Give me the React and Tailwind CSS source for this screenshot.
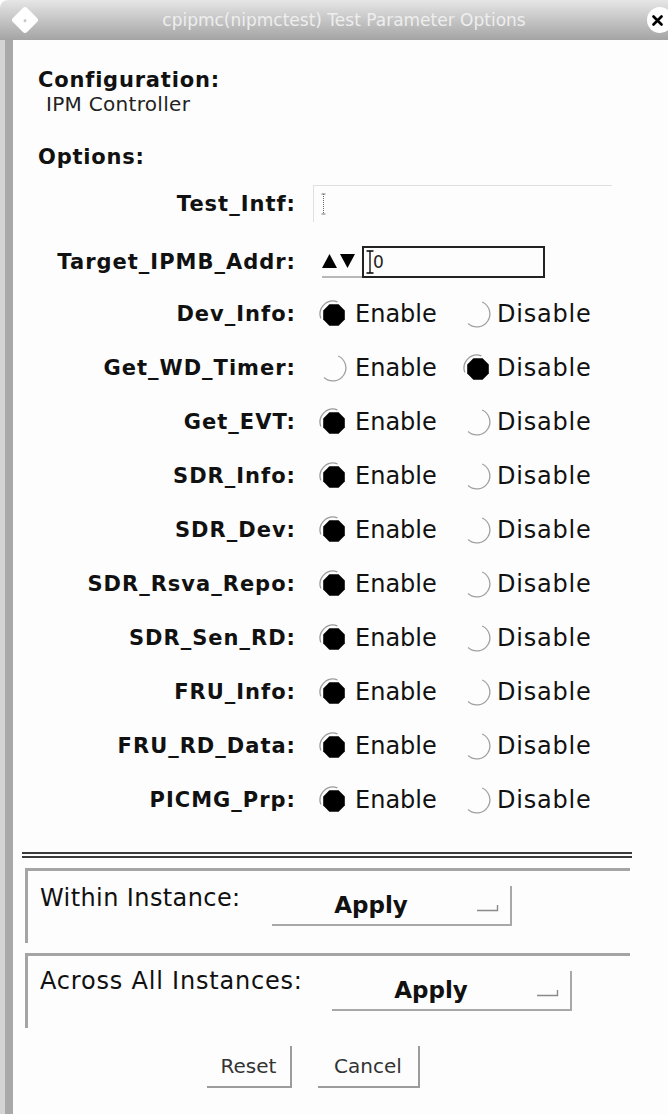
import React from "react";

const rows = [
  ["Dev_Info", true],
  ["Get_WD_Timer", false],
  ["Get_EVT", true],
  ["SDR_Info", true],
  ["SDR_Dev", true],
  ["SDR_Rsva_Repo", true],
  ["SDR_Sen_RD", true],
  ["FRU_Info", true],
  ["FRU_RD_Data", true],
  ["PICMG_Prp", true],
];

function Radio({ on }) {
  return (
    <svg width="30" height="30" viewBox="0 0 30 30" className="shrink-0">
      {on ? (
        <>
          <path d="M2.8 19.4 A13 13 0 0 1 19.4 2.8" stroke="#9a9a9a" strokeWidth="1.3" fill="none" />
          <polygon
            points="26.8,20.6 20.6,26.8 11.4,26.8 5.2,20.6 5.2,11.4 11.4,5.2 20.6,5.2 26.8,11.4"
            fill="#000"
          />
        </>
      ) : (
        <path d="M20.1 3 A13 13 0 1 1 6.1 24.5" stroke="#a0a0a0" strokeWidth="1.3" fill="none" />
      )}
    </svg>
  );
}

function Label({ children }) {
  return (
    <div className="w-[258px] shrink-0 text-right text-[21px] leading-[24px] font-bold tracking-[1px] text-[#111]">
      {children}
    </div>
  );
}

function ApplyButton() {
  return (
    <div className="w-[240px] h-[40px] shrink-0 border-r-2 border-b-2 border-[#a8a8a8] flex items-center relative">
      <div className="flex-1 pr-[40px] text-center text-[23px] font-semibold leading-[28px] text-[#111]">Apply</div>
      <svg width="24" height="10" viewBox="0 0 24 10" className="absolute right-[10px] top-[17px]">
        <path d="M1 7.5 H21.5 V2" stroke="#8a8a8a" strokeWidth="1.4" fill="none" />
      </svg>
    </div>
  );
}

export default function App() {
  return (
    <div className="w-[668px] h-[1114px] overflow-hidden flex flex-col bg-white font-['DejaVu_Sans',sans-serif] text-black">
      {/* Title bar */}
      <div className="h-[40px] shrink-0 flex items-center bg-[linear-gradient(#e6e6e6,#a4a4a4)] rounded-tl-[8px]">
        <div className="w-[50px] flex justify-center">
          <div className="w-[20px] h-[20px] rotate-45 rounded-[3px] bg-white flex items-center justify-center">
            <div className="w-[3px] h-[3px] rounded-full bg-[#c8c8c8]" />
          </div>
        </div>
        <div className="flex-1 text-center text-[17px] leading-[20px] text-[#eeeeee]">
          cpipmc(nipmctest) Test Parameter Options
        </div>
        <div className="w-[30px] flex justify-end">
          <div className="w-[26px] h-[26px] rounded-full bg-white mr-[-5px] flex items-center justify-center pr-[6px]">
            <svg width="11" height="11" viewBox="0 0 11 11">
              <path d="M1.5 1.5 L9.5 9.5 M9.5 1.5 L1.5 9.5" stroke="#000" strokeWidth="2.6" strokeLinecap="round" />
            </svg>
          </div>
        </div>
      </div>

      {/* Body */}
      <div className="flex-1 flex">
        <div className="w-[13px] shrink-0 border-l-[5px] border-[#d4d4d4] bg-[#a9a9a9]" />
        <div className="flex-1 bg-[#fdfdfd] pl-[25px] pt-[28px] flex flex-col">
          <div className="text-[21px] leading-[24px] font-bold tracking-[0.8px] text-[#111]">Configuration:</div>
          <div className="ml-[8px] text-[20px] leading-[24px] tracking-[0.3px] text-[#222]">IPM Controller</div>
          <div className="mt-[29px] text-[21px] leading-[24px] font-bold tracking-[0.8px] text-[#111]">Options:</div>

          {/* Test_Intf */}
          <div className="mt-[16px] h-[37px] flex items-center">
            <Label>Test_Intf:</Label>
            <div className="ml-[17px] w-[299px] h-[37px] border-t border-l border-[#e0e0e0] flex items-center pl-[7px]">
              <svg width="5" height="22" viewBox="0 0 5 22">
                <path d="M0.5 1 H4.5 M0.5 21 H4.5" stroke="#777" strokeWidth="1" />
                <path d="M2.5 1 V21" stroke="#666" strokeWidth="1" strokeDasharray="1 1" />
              </svg>
            </div>
          </div>

          {/* Target_IPMB_Addr */}
          <div className="mt-[24px] h-[32px] flex items-center">
            <Label>Target_IPMB_Addr:</Label>
            <div className="ml-[26px] w-[40px] h-[32px] flex items-center border-b-2 border-[#b8b8b8]">
              <svg width="36" height="16" viewBox="0 0 36 16">
                <polygon points="0,15 7.5,1 15,15" fill="#000" />
                <polygon points="18,1 33,1 25.5,15" fill="#000" />
              </svg>
            </div>
            <div className="w-[183px] h-[32px] border-2 border-[#222] flex items-center pl-[2px]">
              <svg width="8" height="24" viewBox="0 0 8 24">
                <path d="M0.5 1 H7.5 M0.5 23 H7.5 M4 1 V23" stroke="#000" strokeWidth="1.3" />
              </svg>
              <span className="text-[17px] leading-[20px] text-[#222] -ml-[1px]">0</span>
            </div>
          </div>

          {/* Radio rows */}
          <div className="mt-[9px] flex flex-col">
            {rows.map(([name, on]) => (
              <div key={name} className="h-[54px] flex items-center">
                <Label>{name}:</Label>
                <div className="ml-[22px] w-[144px] flex items-center">
                  <Radio on={on} />
                  <span className="ml-[7px] text-[24px] leading-[28px] text-[#111]">Enable</span>
                </div>
                <div className="flex items-center">
                  <Radio on={!on} />
                  <span className="ml-[5px] text-[24px] leading-[28px] tracking-[0.8px] text-[#111]">Disable</span>
                </div>
              </div>
            ))}
          </div>

          {/* Separator */}
          <div className="mt-[25px] -ml-[16px] w-[610px] h-[6px] border-t-2 border-b-2 border-[#3a3a3a]" />

          {/* Within Instance */}
          <div className="mt-[10px] -ml-[13px] w-[605px] h-[75px] border-t-[3px] border-l-[3px] border-[#a4a4a4] flex items-start">
            <div className="w-[244px] pl-[12px] mt-[13px] text-[24px] leading-[28px] tracking-[0.4px] text-[#111]">
              Within Instance:
            </div>
            <div className="mt-[15px]">
              <ApplyButton />
            </div>
          </div>

          {/* Across All Instances */}
          <div className="mt-[10px] -ml-[13px] w-[605px] h-[75px] border-t-[3px] border-l-[3px] border-[#a4a4a4] flex items-start">
            <div className="w-[304px] pl-[12px] mt-[11px] text-[24px] leading-[28px] tracking-[0.8px] text-[#111]">
              Across All Instances:
            </div>
            <div className="mt-[15px]">
              <ApplyButton />
            </div>
          </div>

          {/* Buttons */}
          <div className="mt-[18px] flex">
            <div className="ml-[169px] w-[85px] h-[42px] border-r-2 border-b-2 border-[#9c9c9c] flex items-center justify-center text-[20px] text-[#333]">
              Reset
            </div>
            <div className="ml-[26px] w-[102px] h-[42px] border-r-2 border-b-2 border-[#9c9c9c] flex items-center justify-center text-[20px] text-[#333]">
              Cancel
            </div>
          </div>
        </div>
      </div>
    </div>
  );
}
